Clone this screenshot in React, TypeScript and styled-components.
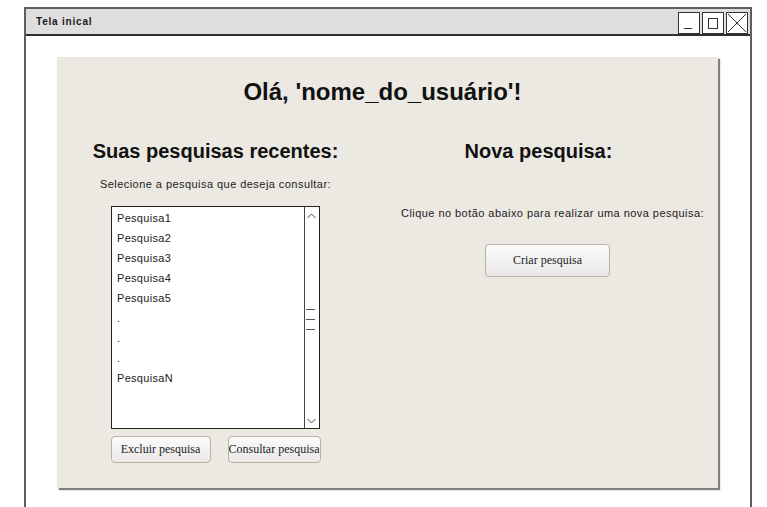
import React from "react";
import styled, { createGlobalStyle } from "styled-components";

const GlobalStyle = createGlobalStyle`
  html, body { margin: 0; padding: 0; background: #ffffff; overflow: hidden; }
  body { font-family: "Liberation Sans", Arial, sans-serif; }
`;

const Window = styled.div`
  margin: 7px 0 0 24px;
  width: 728px;
  height: 520px;
  box-sizing: border-box;
  border: 2px solid #5e5e5e;
  border-bottom: none;
  background: #ffffff;
  display: flex;
  flex-direction: column;
`;

const TitleBar = styled.div`
  height: 25px;
  background: #dedede;
  border-bottom: 2px solid #2e2e2e;
  display: flex;
  align-items: center;
  justify-content: space-between;
  padding: 0 0 0 10px;
`;

const TitleText = styled.span`
  font-family: "Liberation Sans", Arial, sans-serif;
  font-weight: bold;
  font-size: 10px;
  letter-spacing: 0.8px;
  color: #1a1a1a;
`;

const WinButtons = styled.div`
  display: flex;
  gap: 2px;
  padding-right: 2px;
  align-self: flex-start;
  margin-top: 3px;
`;

const WinButton = styled.div`
  width: 22px;
  height: 22px;
  box-sizing: border-box;
  border: 1px solid #333;
  background: #ffffff;
  display: flex;
  align-items: center;
  justify-content: center;
`;

const Content = styled.div`
  padding: 21px 0 0 31px;
`;

const Panel = styled.div`
  width: 661px;
  height: 431px;
  box-sizing: border-box;
  background: #ece9e3;
  box-shadow: 2px 2px 1px rgba(0, 0, 0, 0.5);
  padding-top: 23px;
  display: flex;
  flex-direction: column;
`;

const Greeting = styled.h1`
  margin: 0;
  padding-right: 10px;
  font-family: "Liberation Sans", Arial, sans-serif;
  font-weight: bold;
  font-size: 24px;
  line-height: 24px;
  text-align: center;
  color: #111;
`;

const Columns = styled.div`
  display: grid;
  grid-template-columns: 330px 331px;
  margin-top: 37px;
`;

const Column = styled.div<{ $padL?: number; $padR?: number }>`
  display: flex;
  flex-direction: column;
  align-items: center;
  padding-left: ${(p) => p.$padL ?? 0}px;
  padding-right: ${(p) => p.$padR ?? 0}px;
`;

const SubHeading = styled.h2<{ $shift?: number }>`
  margin: 0;
  font-family: "Liberation Sans", Arial, sans-serif;
  font-weight: bold;
  font-size: 20px;
  line-height: 20px;
  color: #111;
  position: relative;
  left: ${(p) => p.$shift ?? 0}px;
`;

const Note = styled.p<{ $top: number }>`
  margin: ${(p) => p.$top}px 0 0;
  font-family: "Liberation Sans", Arial, sans-serif;
  font-size: 11px;
  letter-spacing: 0.45px;
  line-height: 14px;
  color: #222;
  white-space: nowrap;
`;

const ListBox = styled.div`
  margin-top: 15px;
  width: 209px;
  height: 223px;
  box-sizing: border-box;
  border: 1px solid #222;
  background: #ffffff;
  display: flex;
`;

const ListItems = styled.ul`
  flex: 1;
  margin: 0;
  padding: 1px 0 0 5px;
  list-style: none;
`;

const ListItem = styled.li`
  font-family: "Liberation Sans", Arial, sans-serif;
  font-size: 11px;
  letter-spacing: 0.3px;
  line-height: 20px;
  color: #222;
`;

const ScrollBar = styled.div`
  width: 14px;
  border-left: 1px solid #444;
  position: relative;
`;

const ScrollMark = styled.svg`
  position: absolute;
  left: 0;
`;

const ButtonRow = styled.div`
  margin-top: 7px;
  width: 210px;
  display: flex;
  justify-content: space-between;
`;

const Button = styled.button<{ $w: number; $h: number }>`
  width: ${(p) => p.$w}px;
  height: ${(p) => p.$h}px;
  padding: 0;
  box-sizing: border-box;
  border: 1px solid #b9b2a4;
  border-radius: 4px;
  background: linear-gradient(#fbfbfa, #e9e8e6);
  font-family: "Liberation Serif", "Times New Roman", serif;
  font-size: 12px;
  color: #222;
  white-space: nowrap;
  overflow: hidden;
`;

const CreateButton = styled(Button)`
  margin-top: 24px;
  margin-right: 10px;
`;

const items = ["Pesquisa1", "Pesquisa2", "Pesquisa3", "Pesquisa4", "Pesquisa5", ".", ".", ".", "PesquisaN"];

export default function App() {
  return (
    <>
      <GlobalStyle />
      <Window>
        <TitleBar>
          <TitleText>Tela inical</TitleText>
          <WinButtons>
            <WinButton>
              <svg width="20" height="20" viewBox="0 0 20 20">
                <line x1="5" y1="15.5" x2="13" y2="15.5" stroke="#333" strokeWidth="1" />
              </svg>
            </WinButton>
            <WinButton>
              <svg width="20" height="20" viewBox="0 0 20 20">
                <rect x="5.5" y="5.5" width="9" height="10" fill="none" stroke="#333" strokeWidth="1" />
              </svg>
            </WinButton>
            <WinButton>
              <svg width="20" height="20" viewBox="0 0 20 20">
                <line x1="1" y1="1" x2="19" y2="19" stroke="#333" strokeWidth="1" />
                <line x1="19" y1="1" x2="1" y2="19" stroke="#333" strokeWidth="1" />
              </svg>
            </WinButton>
          </WinButtons>
        </TitleBar>
        <Content>
          <Panel>
            <Greeting>Olá, 'nome_do_usuário'!</Greeting>
            <Columns>
              <Column $padL={34} $padR={47}>
                <SubHeading>Suas pesquisas recentes:</SubHeading>
                <Note $top={16}>Selecione a pesquisa que deseja consultar:</Note>
                <ListBox>
                  <ListItems>
                    {items.map((t, i) => (
                      <ListItem key={i}>{t}</ListItem>
                    ))}
                  </ListItems>
                  <ScrollBar>
                    <ScrollMark width="13" height="12" viewBox="0 0 13 12" style={{ top: 3 }}>
                      <polyline points="2.5,8 6.5,4 10.5,8" fill="none" stroke="#444" strokeWidth="1" />
                    </ScrollMark>
                    <ScrollMark width="13" height="30" viewBox="0 0 13 30" style={{ top: 98 }}>
                      <line x1="1" y1="4.5" x2="10" y2="4.5" stroke="#555" strokeWidth="1" />
                      <line x1="1" y1="14.5" x2="10" y2="14.5" stroke="#555" strokeWidth="1" />
                      <line x1="1" y1="24.5" x2="10" y2="24.5" stroke="#555" strokeWidth="1" />
                    </ScrollMark>
                    <ScrollMark width="13" height="12" viewBox="0 0 13 12" style={{ bottom: 1 }}>
                      <polyline points="2.5,4 6.5,8 10.5,4" fill="none" stroke="#444" strokeWidth="1" />
                    </ScrollMark>
                  </ScrollBar>
                </ListBox>
                <ButtonRow>
                  <Button $w={100} $h={27}>Excluir pesquisa</Button>
                  <Button $w={93} $h={27}>Consultar pesquisa</Button>
                </ButtonRow>
              </Column>
              <Column>
                <SubHeading $shift={-14}>Nova pesquisa:</SubHeading>
                <Note $top={45}>Clique no botão abaixo para realizar uma nova pesquisa:</Note>
                <CreateButton $w={125} $h={33}>Criar pesquisa</CreateButton>
              </Column>
            </Columns>
          </Panel>
        </Content>
      </Window>
    </>
  );
}
